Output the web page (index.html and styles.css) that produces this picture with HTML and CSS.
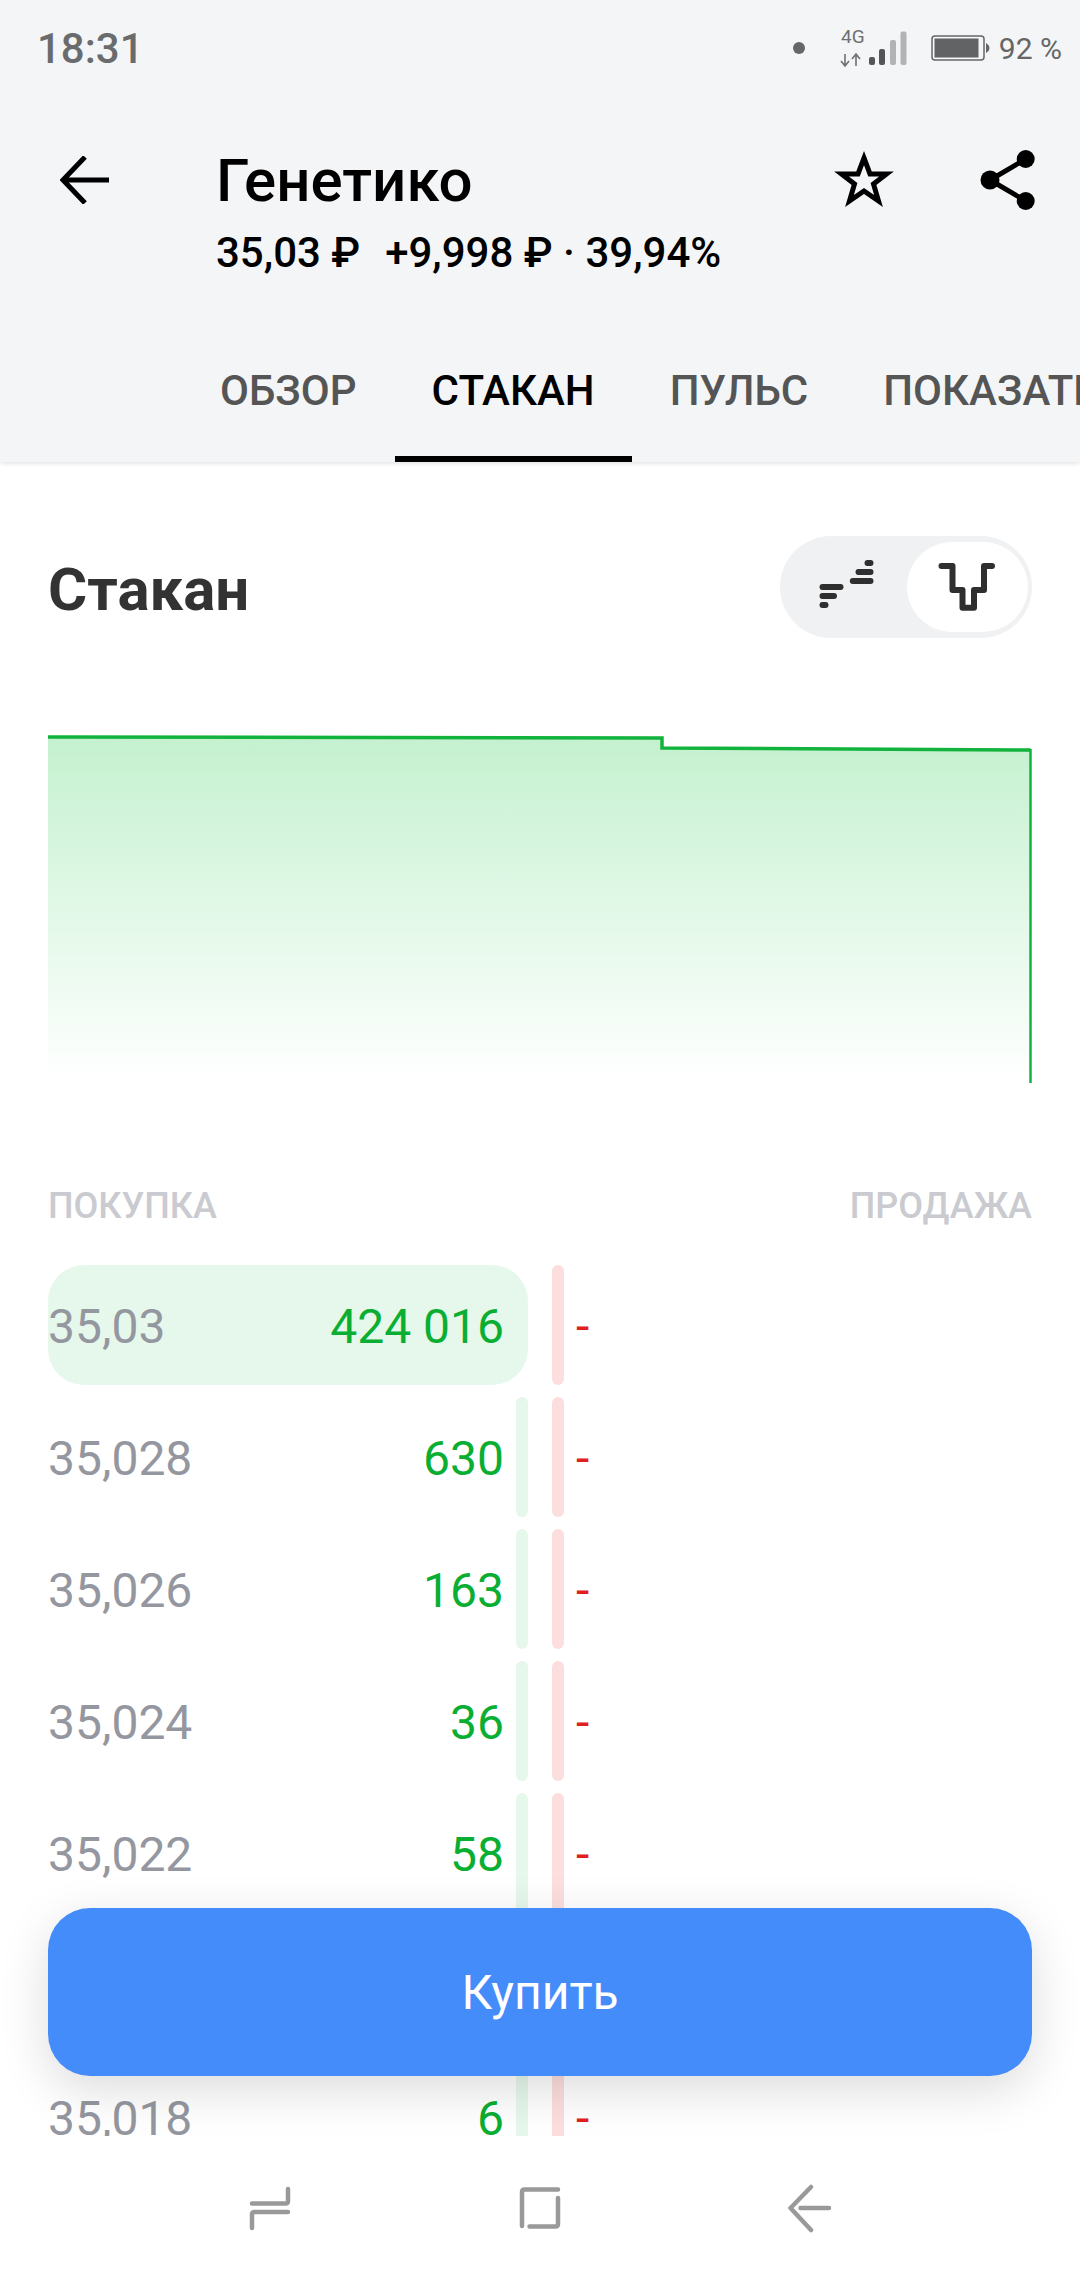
FILE: index.html
```html
<!DOCTYPE html>
<html lang="ru">
<head>
<meta charset="utf-8">
<title>Генетико</title>
<link rel="stylesheet" href="styles.css">
</head>
<body>
<div class="screen">
  <header class="top">
    <div class="status">
      <span class="time">18:31</span>
      <div class="status-right">
        <span class="dot"></span>
        <svg class="net" width="68" height="40" viewBox="0 0 68 40">
          <text x="1" y="15" class="net-text">4G</text>
          <path d="M5 26v12M1 33l4 5 4-5M16 38V26M12 31l4-5 4 5" fill="none" stroke="#6f7072" stroke-width="1.6"/>
          <rect x="29" y="29" width="6" height="8" rx="2" fill="#555"/>
          <rect x="39" y="21" width="6" height="16" rx="2" fill="#555"/>
          <rect x="50" y="12" width="6" height="25" rx="2" fill="#b2b3b5"/>
          <rect x="60.500" y="3.500" width="6" height="33.500" rx="2" fill="#b2b3b5"/>
        </svg>
        <svg class="batt" width="59" height="26" viewBox="0 0 59 26">
          <rect x="1" y="1" width="52" height="24" rx="3" fill="none" stroke="#666" stroke-width="1.5"/>
          <rect x="3.500" y="3.500" width="44" height="19" fill="#626364"/>
          <path d="M55 8c2 1 3.500 3 3.500 5s-1.500 4-3.500 5z" fill="#666"/>
        </svg>
        <span class="pct">92 %</span>
      </div>
    </div>
    <div class="titlebar">
      <svg class="back" width="50" height="48" viewBox="0 0 50 48">
        <path d="M25 1 3 24l22 23M3 24h46" fill="none" stroke="#000" stroke-width="5"/>
      </svg>
      <div class="title-text">
        <div class="name">Генетико</div>
        <div class="quote"><span>35,03 ₽</span><span>+9,998 ₽ · 39,94%</span></div>
      </div>
      <svg class="star" width="60" height="60" viewBox="0 0 60 60">
        <path d="M30 8 36 24H52.500L39.500 34 44.500 51 30 41 15.500 51 20.500 34 7.500 24H24z" fill="none" stroke="#000" stroke-width="5"/>
      </svg>
      <svg class="share" width="56" height="60" viewBox="0 0 56 60">
        <path d="M45.700 9 10 30l35.700 21" fill="none" stroke="#000" stroke-width="5"/>
        <circle cx="45.700" cy="9" r="9" fill="#000"/><circle cx="10" cy="30" r="9.500" fill="#000"/><circle cx="45.700" cy="51" r="9" fill="#000"/>
      </svg>
    </div>
    <nav class="tabs">
      <div class="tab">ОБЗОР</div>
      <div class="tab active">СТАКАН</div>
      <div class="tab">ПУЛЬС</div>
      <div class="tab">ПОКАЗАТЕЛИ</div>
    </nav>
  </header>

  <main class="content">
    <div class="head-row">
      <h1 class="heading">Стакан</h1>
      <div class="toggle">
        <span class="toggle-opt">
          <svg width="62" height="56" viewBox="0 0 62 56">
            <path d="M6.500 28H24.500M6.500 37H18M6.500 46H9.500M36.800 22H54.500M42.500 13H54.500M51.500 4H54.500" fill="none" stroke="#2f2f2f" stroke-width="6" stroke-linecap="round"/>
          </svg>
        </span>
        <span class="toggle-opt on">
          <svg width="60" height="50" viewBox="0 0 60 50">
            <path d="M3.500 4H14.500V28H24.500V45.700H36V28H46V4H54" fill="none" stroke="#2f2f2f" stroke-width="6" stroke-linecap="round" stroke-linejoin="round"/>
          </svg>
        </span>
      </div>
    </div>

    <svg class="chart" width="984" height="350" viewBox="0 0 984 350">
      <defs>
        <linearGradient id="fill" x1="0" y1="0" x2="0" y2="1">
          <stop offset="0" stop-color="#c4f1cf"/>
          <stop offset="1" stop-color="#fff"/>
        </linearGradient>
      </defs>
      <path d="M0 2H614V13L983 15V346H0z" fill="url(#fill)"/>
      <path d="M0 2L614 3V13L982.500 15" fill="none" stroke="#12b33c" stroke-width="3.500"/>
      <path d="M982.500 14V348" fill="none" stroke="#12b33c" stroke-width="2.500"/>
    </svg>

    <div class="labels"><span>ПОКУПКА</span><span>ПРОДАЖА</span></div>

    <div class="book">
      <div class="row"><div class="bid best"><span class="price">35,03</span><span class="qty">424 016</span></div><div class="bar-r"></div><span class="ask">-</span></div>
      <div class="row"><div class="bid"><span class="price">35,028</span><span class="qty">630</span></div><div class="bar-g"></div><div class="bar-r"></div><span class="ask">-</span></div>
      <div class="row"><div class="bid"><span class="price">35,026</span><span class="qty">163</span></div><div class="bar-g"></div><div class="bar-r"></div><span class="ask">-</span></div>
      <div class="row"><div class="bid"><span class="price">35,024</span><span class="qty">36</span></div><div class="bar-g"></div><div class="bar-r"></div><span class="ask">-</span></div>
      <div class="row"><div class="bid"><span class="price">35,022</span><span class="qty">58</span></div><div class="bar-g"></div><div class="bar-r"></div><span class="ask">-</span></div>
      <div class="row"><div class="bid"></div><div class="bar-g"></div><div class="bar-r"></div></div>
      <div class="row"><div class="bid"><span class="price">35,018</span><span class="qty">6</span></div><div class="bar-g"></div><div class="bar-r"></div><span class="ask">-</span></div>
    </div>
    <button class="buy">Купить</button>
  </main>

  <footer class="navbar">
    <svg class="nav-recent" width="44" height="50" viewBox="0 0 44 50">
      <path d="M40 5V17q0 2.500-2.500 2.500H4M40 28H6.500Q4 28 4 30.500V44" fill="none" stroke="#999" stroke-width="4.500" stroke-linecap="round"/>
    </svg>
    <svg class="nav-home" width="44" height="50" viewBox="0 0 44 50">
      <path d="M40 5.500H6.500Q4 5.500 4 8V42M40 14V40q0 2.500-2.500 2.500H11.500" fill="none" stroke="#999" stroke-width="4.500" stroke-linecap="round"/>
    </svg>
    <svg class="nav-back" width="48" height="50" viewBox="0 0 48 50">
      <path d="M25 3 4.500 24 25 46M14.500 24H43" fill="none" stroke="#999" stroke-width="4.500" stroke-linecap="round" stroke-linejoin="round"/>
    </svg>
  </footer>
</div>
</body>
</html>
```
FILE: styles.css
```css
* { box-sizing: border-box; }
html, body { margin: 0; padding: 0; background: #fff; }
body { font-family: Roboto, "Noto Sans", sans-serif; }
.screen { width: 1080px; height: 2280px; display: flex; flex-direction: column; overflow: hidden; position: relative; }

.top { height: 462px; background: #f3f5f7; box-shadow: 0 2px 4px rgba(0,0,0,.1); position: relative; z-index: 2; flex: none; overflow: hidden; }
.top { overflow: visible; }

.status { height: 100px; padding: 0 18px 4px 37px; display: flex; align-items: center; justify-content: space-between; }
.time { font-size: 42px; font-weight: 500; color: #6a6b6d; }
.status-right { display: flex; align-items: center; }
.dot { width: 12px; height: 12px; border-radius: 50%; background: #666; margin-right: 35px; }
.net { margin-right: 23px; }
.net-text { font-size: 19px; fill: #6f7072; }
.batt { margin-right: 9px; }
.pct { font-size: 30px; color: #666; }

.titlebar { height: 248px; padding-left: 60px; display: flex; align-items: flex-start; }
.back { margin-top: 56px; flex: none; }
.title-text { margin-left: 106px; flex: 1; padding-top: 44px; }
.name { font-size: 60px; font-weight: 500; line-height: 74px; color: #000; }
.quote { font-size: 42px; font-weight: 500; line-height: 50px; margin-top: 10px; color: #000; display: flex; gap: 25px; }
.star { margin-top: 50px; margin-right: 86px; flex: none; }
.share { margin-top: 50px; margin-right: 44px; flex: none; }

.tabs { height: 114px; display: flex; gap: 1px; padding-left: 183px; white-space: nowrap; overflow: hidden; }
.tab { padding: 16px 37px 0; height: 114px; font-size: 42px; font-weight: 500; color: #555; line-height: 54px; }
.tab.active { color: #000; border-bottom: 6px solid #000; }

.content { flex: 1; min-height: 0; padding: 74px 48px 0; position: relative; overflow: hidden; }
.head-row { display: flex; justify-content: space-between; align-items: center; height: 102px; }
.heading { margin: 0; padding-top: 4px; font-size: 60px; font-weight: 700; color: #333; }
.toggle { width: 252px; height: 102px; background: #eff1f2; border-radius: 51px; padding: 6px; display: flex; justify-content: space-between; align-items: center; }
.toggle-opt { display: flex; align-items: center; justify-content: center; flex: none; height: 90px; width: 121px; border-radius: 45px; }
.toggle-opt.on { background: #fff; }

.chart { display: block; margin-top: 97px; }

.labels { display: flex; justify-content: space-between; margin-top: 96px; font-size: 36px; font-weight: 500; color: #c9cbd0; line-height: 50px; }

.book { margin-top: 34px; display: flex; flex-direction: column; gap: 12px; }
.row { height: 120px; flex: none; display: flex; align-items: stretch; font-size: 48px; }
.bid { width: 468px; display: flex; justify-content: space-between; align-items: center; padding: 2px 12px 0 0; }
.bid.best { width: 480px; padding-right: 24px; background: #e6f8ec; border-radius: 36px; }
.price { color: #9497a0; }
.qty { color: #0aae32; }
.bar-g { width: 12px; background: #e6f8ec; border-radius: 6px; flex: none; }
.bar-r { width: 12px; margin-left: 24px; background: #fddede; border-radius: 6px; flex: none; }
.ask { color: #e02020; margin-left: 12px; padding-top: 2px; align-self: center; }

.buy { position: absolute; left: 48px; top: 1446px; width: 984px; height: 168px; background: #458cfb; color: #fff; border: 0; border-radius: 42px; font: 400 48px Roboto, sans-serif; box-shadow: 0 14px 50px rgba(0,0,0,.14); }

.navbar { height: 144px; flex: none; background: #fff; position: relative; z-index: 1; display: flex; align-items: flex-start; padding: 48px 0 0 248px; }
.nav-home { margin-left: 226px; }
.nav-back { margin-left: 224px; }
```
